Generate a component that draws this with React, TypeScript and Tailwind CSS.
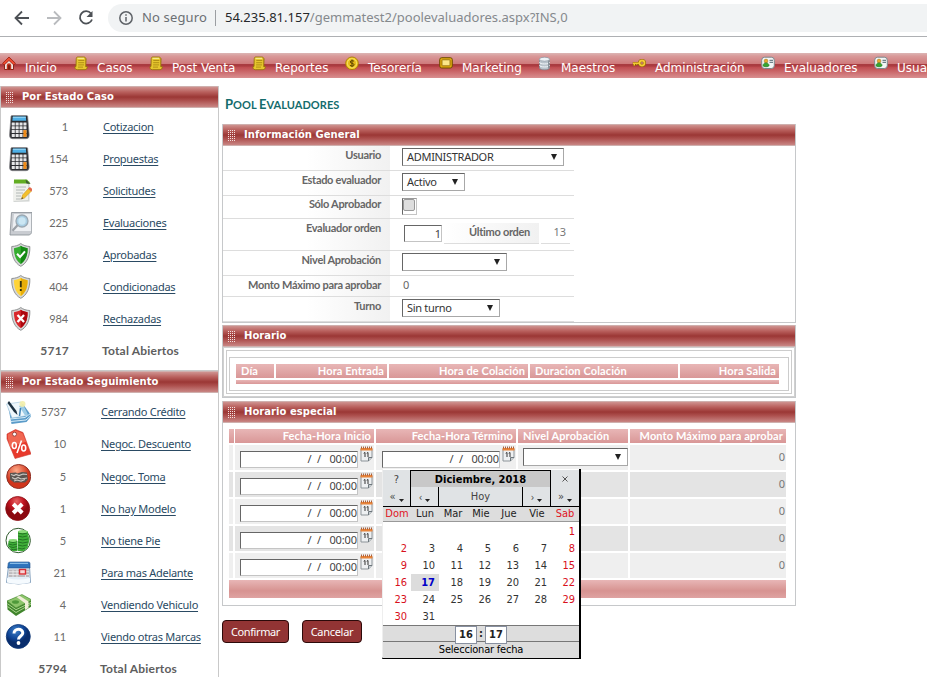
import React from "react";

const verdana = "font-['DejaVu_Sans',sans-serif]";
const calibri = "font-['Lato',sans-serif]";
const segoe = "font-['Noto_Sans',sans-serif]";
const tahoma = "font-['DejaVu_Sans_Condensed','DejaVu_Sans',sans-serif]";

/* ---------- menu icons (14 x 16) ---------- */
const HomeIcon = () => (
  <svg width="14" height="16" viewBox="0 0 14 16">
    <path d="M2.500 7v6.500h9V7L7 3z" fill="#f1e6e3" stroke="#8a2416" />
    <path d="M.6 7.300L7 1l6.400 6.300-1.600 1.700L7 4.500 2.200 9z" fill="#ee4a30" stroke="#951f10" strokeWidth=".8" />
    <path d="M4.800 13.500V9.500a2.200 2.200 0 0 1 4.400 0v4z" fill="#c2331e" />
    <path d="M6.200 13.500v-3.800a.8.8 0 0 1 1.600 0v3.800z" fill="#6d170c" />
  </svg>
);
const ScrollIcon = () => (
  <svg width="14" height="16" viewBox="0 0 14 16">
    <path d="M3.500 1h6.300c1.700 0 2.700 1.500 2.200 3.500l-.3 6h1.500c.3 2-.7 3.200-2.200 3.200H3.300C1.300 13.700.8 12 1 10.500h1l.2-7C2.200 2 2.600 1 3.500 1z" fill="#e6c62e" stroke="#96730c" strokeWidth=".9" />
    <path d="M4.300 4.500h6M4.200 6.700h6M4.100 8.900h6M4 11.100h5" stroke="#a5830f" strokeWidth=".8" />
    <path d="M3.500 2.300h6.500" stroke="#fbf0a0" />
    <path d="M11.500 3v8" stroke="#b08c14" strokeWidth=".8" />
  </svg>
);
const CoinIcon = () => (
  <svg width="14" height="16" viewBox="0 0 14 16">
    <circle cx="7" cy="7.300" r="6.300" fill="#f5cf28" stroke="#a57b05" strokeWidth=".9" />
    <circle cx="7" cy="7.300" r="4.500" fill="#e3b717" stroke="#fbea83" strokeWidth=".7" />
    <path d="M9 5.300C8.300 4.500 5.300 4.300 5.300 6c0 1.600 3.700 1 3.700 2.700 0 1.700-3 1.600-3.900.6M7 3.500v7.600" stroke="#5c4300" fill="none" />
  </svg>
);
const TvIcon = () => (
  <svg width="14" height="16" viewBox="0 0 14 16">
    <rect x=".7" y="1.700" width="12.600" height="10.300" rx="2" fill="#e0ab10" stroke="#6f4d00" />
    <rect x="3" y="3.800" width="8" height="6" rx=".6" fill="#fbe689" stroke="#8c6504" strokeWidth=".8" />
  </svg>
);
const DbIcon = () => (
  <svg width="14" height="16" viewBox="0 0 14 16">
    <path d="M1.500 3v9c0 2.400 10 2.400 10 0V3z" fill="#b9c3cb" stroke="#7c878f" strokeWidth=".7" />
    <ellipse cx="6.500" cy="3.200" rx="5" ry="2" fill="#edf3f7" stroke="#8995a0" strokeWidth=".7" />
    <path d="M1.500 6.300c0 2.200 10 2.200 10 0M1.500 9.300c0 2.200 10 2.200 10 0" stroke="#f2f6f9" fill="none" />
    <path d="M10.500 4.500v8" stroke="#89949c" />
  </svg>
);
const KeyIcon = () => (
  <svg width="14" height="16" viewBox="0 0 14 16">
    <path d="M8 7.300H.8M2.300 7v2.800M4.600 7v2" stroke="#8f6500" strokeWidth="2.600" fill="none" />
    <circle cx="10" cy="7" r="2.500" fill="none" stroke="#8f6500" strokeWidth="3" />
    <path d="M8 7.300H1M2.300 7v2.400M4.600 7v1.600" stroke="#f3ca36" strokeWidth="1.400" fill="none" />
    <circle cx="10" cy="7" r="2.500" fill="none" stroke="#f3ca36" strokeWidth="1.800" />
  </svg>
);
const CardIcon = () => (
  <svg width="14" height="16" viewBox="0 0 14 16">
    <rect x=".7" y="1.200" width="12.600" height="11.300" rx="3" fill="#f3f6f6" stroke="#7b898c" />
    <circle cx="5" cy="5" r="1.900" fill="#e7ac2c" stroke="#a27015" strokeWidth=".5" />
    <path d="M2 9.500c0-3.500 6-3.500 6 0 0 1.700-6 1.700-6 0z" fill="#36a52f" stroke="#16751a" strokeWidth=".6" />
    <path d="M8.500 4.300H12M8.500 6.300H12" stroke="#4c646e" />
  </svg>
);

const menu: { label: string; w: string; Icon: React.FC }[] = [
  { label: "Inicio", w: "w-[72px]", Icon: HomeIcon },
  { label: "Casos", w: "w-[75px]", Icon: ScrollIcon },
  { label: "Post Venta", w: "w-[103px]", Icon: ScrollIcon },
  { label: "Reportes", w: "w-[93px]", Icon: ScrollIcon },
  { label: "Tesorería", w: "w-[94px]", Icon: CoinIcon },
  { label: "Marketing", w: "w-[99px]", Icon: TvIcon },
  { label: "Maestros", w: "w-[94px]", Icon: DbIcon },
  { label: "Administración", w: "w-[129px]", Icon: KeyIcon },
  { label: "Evaluadores", w: "w-[113px]", Icon: CardIcon },
  { label: "Usua", w: "w-[53px]", Icon: CardIcon },
];

/* ---------- sidebar icons (26 x 30) ---------- */
const Svg = ({ children }: { children: React.ReactNode }) => (
  <svg width="26" height="30" viewBox="0 0 26 30">{children}</svg>
);
const Calculator = () => (
  <Svg>
    <path d="M6 3.500h14.500q1 0 1.200 1l1.500 18.500q.2 3.700-3 3.700H6.500q-3.200 0-3-3.700L5 4.500q.1-1 1-1z" fill="#2b2c30" stroke="#8a8a8e" strokeWidth=".7" />
    <path d="M6.800 4.500h13l.4 4.300H6.300z" fill="#4fb0e6" />
    <path d="M6.800 5.300h13" stroke="#9bd8f6" />
    <g fill="#e6e6e8">
      {[0, 1, 2, 3].map((r) => [0, 1, 2, 3].map((c) => (
        <rect key={`${r}${c}`} x={5.700 + c * 3.900} y={10.500 + r * 3.800} width="3.100" height="3" rx=".3" />
      )))}
    </g>
    <rect x="17.400" y="18.100" width="3.100" height="6.800" fill="#f08a16" />
  </Svg>
);
const Notes = () => (
  <Svg>
    <path d="M8 5h15.500v20.500l-16 .5z" fill="#d2d5d3" />
    <path d="M7.500 5h14.500v19L7 25z" fill="#eff0ec" />
    <path d="M8 3.500h13l3.500 4H8z" fill="#62ad22" />
    <path d="M19.500 3.500l5 4.500-4-.5z" fill="#3c5a34" />
    <path d="M10 11h10M10 14h9M10 17h7M10 20h5M10 23h6" stroke="#b2b8b6" />
    <path d="M15.500 23l1-4L22.500 12.500l3 2.600L18.500 22z" fill="#f3c02c" stroke="#c28a18" strokeWidth=".5" />
    <path d="M22 12.700l3.300 2.800 1.500-2-3-2.500z" fill="#e2694e" />
    <path d="M15.500 23l.5-1.700 1.300 1z" fill="#333" />
  </Svg>
);
const Magnify = () => (
  <Svg>
    <path d="M5.500 4.500h20.500v20l-2.500 2.500H4z" fill="#c9ccd1" stroke="#878d93" strokeWidth=".8" />
    <path d="M8 6h17v17H6.500z" fill="#eef0f3" />
    <circle cx="16" cy="13" r="6" fill="#a9cde2" stroke="#9ba8b2" strokeWidth="1.300" />
    <circle cx="16" cy="13" r="3.700" fill="#cbe6f3" />
    <path d="M11.500 17.300l-5 5.500" stroke="#9ba0a6" strokeWidth="2.300" />
  </Svg>
);
const Shield = ({ a, b, children }: { a: string; b: string; children: React.ReactNode }) => (
  <Svg>
    <g transform="translate(1.300 1.200) scale(.93)">
      <path d="M14.500 2.500c2.500 2 6 3 9.700 3.200C24.700 15.800 21 23.800 14.500 27 8 23.800 4.300 15.800 4.800 5.700c3.700-.2 7.200-1.200 9.700-3.200z" fill="#d5d7d7" stroke="#8b8d8e" />
      <path d="M14.500 5c2 1.500 4.300 2.300 7.300 2.500.2 7.800-2.300 13.700-7.300 17-5-3.300-7.500-9.200-7.300-17C10.200 7.300 12.500 6.500 14.500 5z" fill={a} />
      <path d="M14.500 5v19.500c5-3.300 7.500-9.200 7.300-17C18.800 7.300 16.500 6.500 14.500 5z" fill={b} />
      {children}
    </g>
  </Svg>
);
const ShieldOk = () => (
  <Shield a="#35ad30" b="#148914"><path d="M10.500 13.500l3.200 3.500 5.300-6" stroke="#fff" strokeWidth="2.200" fill="none" /></Shield>
);
const ShieldWarn = () => (
  <Shield a="#ffd438" b="#e8ae0a"><path d="M14.500 8.500v6.500M14.500 17v2.200" stroke="#35310c" strokeWidth="2" /></Shield>
);
const ShieldBad = () => (
  <Shield a="#d9272b" b="#ad080f"><path d="M11 10.500l7 7.500M18 10.500L11 18" stroke="#fff" strokeWidth="2.500" /></Shield>
);
const Contract = () => (
  <Svg>
    <path d="M3 9l15-2 8.500 12-5 6-15 2z" fill="#5a9bc9" />
    <path d="M5 22l15-1.500 5.500-4M5.500 24.500l15.500-1.500 5-4.500" stroke="#d7edf9" fill="none" />
    <path d="M1.500 7L16 5l6.500 13.500L7 21z" fill="#eef7fc" stroke="#9dc3dc" strokeWidth=".6" />
    <path d="M14 9l6 9.500 3-1-5-10z" fill="#9ccbe5" />
    <circle cx="17.500" cy="7" r="3" fill="#f3eeaa" opacity=".9" />
    <path d="M4 4l7.500 10 1 4-3.500-3L2.500 6z" fill="#1d3040" />
    <path d="M14.500 19l1-8" stroke="#3f82b4" strokeWidth="1.500" />
  </Svg>
);
const Tag = () => (
  <Svg>
    <path d="M2 5l8.500-4.500 7.500 3 8 21.500-16 4.500L2 10z" fill="#e83a2c" stroke="#c93a30" strokeWidth=".6" />
    <path d="M2.800 5.500l7.700-4 7 2.800 3.500 8.500L5 18 2.900 9z" fill="#f1735c" opacity=".8" />
    <circle cx="9.500" cy="5.200" r="2" fill="#fff" stroke="#9a443d" />
    <ellipse cx="9.300" cy="16.500" rx="2" ry="3" fill="none" stroke="#fff" strokeWidth="1.600" />
    <ellipse cx="18.700" cy="19" rx="2" ry="3" fill="none" stroke="#fff" strokeWidth="1.600" />
    <path d="M16.500 11.500l-4.500 12.500" stroke="#fff" strokeWidth="1.600" />
  </Svg>
);
const CarBall = () => (
  <Svg>
    <defs><radialGradient id="ball" cx=".4" cy=".25"><stop offset="0" stopColor="#ffab89" /><stop offset="1" stopColor="#d0351c" /></radialGradient></defs>
    <circle cx="13.700" cy="14.500" r="12" fill="url(#ball)" stroke="#8f3226" />
    <path d="M5 11l6-.5 1 1 5-1.500 5 .5 1 7-3 3H9l-4-3z" fill="#5a5450" />
    <path d="M6 12.500l3 1 2-1 3 1 4-1.500 4 .5M7 15.500l3 1.500 3-1.500 3 1.500 6-1M9 19l3-1 4 1 4-1.500" stroke="#cdc8c3" strokeWidth="1.200" fill="none" />
  </Svg>
);
const CrossBall = () => (
  <Svg>
    <defs><radialGradient id="crossball" cx=".45" cy=".2"><stop offset="0" stopColor="#e86464" /><stop offset=".6" stopColor="#c01420" /><stop offset="1" stopColor="#8c0910" /></radialGradient></defs>
    <circle cx="12.700" cy="14.500" r="12" fill="url(#crossball)" stroke="#8c0c12" strokeWidth=".8" />
    <path d="M8.200 10l9 9M17.200 10l-9 9" stroke="#fff" strokeWidth="4" />
  </Svg>
);
const CoinStack = () => (
  <Svg>
    <circle cx="13.200" cy="14.500" r="12.200" fill="#fff" stroke="#2f5a2c" />
    <path d="M3.500 15h9v10h-5L3 20zM13 5h9.500l2 9-2 8-4 3h-5.500z" fill="#3fae38" />
    <g stroke="#206e20" strokeWidth=".9" fill="none">
      <path d="M4 15.500q4 2 8 0M3.500 18q4 2 8.500 0M4 20.500q4 2 8 0M5.500 23q3 1.500 7 0M13 7q4.500 2 9 0M13 10q4.500 2 9 0M13 13q4.500 2 10 0M13 16q4.500 2 10 0M13 19q4.500 2 9 0M13 22q4.500 2 7 0" />
    </g>
    <ellipse cx="17.700" cy="5.500" rx="4.700" ry="1.600" fill="#8cdb7b" />
    <ellipse cx="8" cy="14.500" rx="4.300" ry="1.400" fill="#8cdb7b" />
  </Svg>
);
const Planner = () => (
  <Svg>
    <path d="M3.500 8h21l1 16.500q-12 3-24 0z" fill="#e3eef7" stroke="#6f8fb0" strokeWidth=".8" />
    <path d="M5 4h18.500q1.500 0 1.500 1.500V10H2.700l.5-4.500Q3.500 4 5 4z" fill="#2f74bd" stroke="#1e4f88" strokeWidth=".6" />
    <path d="M5 5.300h18" stroke="#9dcdf2" />
    <path d="M4 11.500h20v7.500H3.500z" fill="#bdbabd" />
    <path d="M4 13.700h20M4 16.500h20M8 12v7M12 12v7M20.500 12v7" stroke="#ededed" strokeWidth=".8" />
    <rect x="14.500" y="11.500" width="6" height="4.500" fill="#f7d6d6" stroke="#db2f34" strokeWidth="1.400" />
    <path d="M2 20q11.500 3 23 0v4.500q-11.500 3-23 0z" fill="#f5fafe" />
  </Svg>
);
const Cash = () => (
  <Svg>
    <path d="M2 11L17 5l10 5v6L11 26 2.500 19.500z" fill="#41852d" />
    <path d="M2 11l15-6.500L27 10l-16 8z" fill="#8cc46a" stroke="#4a8a34" strokeWidth=".6" />
    <path d="M2.500 13.700l8.500 6L27 12M2.500 16.500l8.500 6 16-9" stroke="#a9d58b" fill="none" />
    <path d="M11.500 7l8.500 6.300V20l3.500-2v-6.500L14.500 5.700z" fill="#f0eed8" />
    <ellipse cx="10.500" cy="12" rx="3.500" ry="1.800" fill="#4f993a" />
  </Svg>
);
const Help = () => (
  <Svg>
    <defs><radialGradient id="helpball" cx=".4" cy=".25"><stop offset="0" stopColor="#3f80c8" /><stop offset=".7" stopColor="#0f4596" /><stop offset="1" stopColor="#092d6c" /></radialGradient></defs>
    <circle cx="13.300" cy="14.500" r="12" fill="url(#helpball)" stroke="#0b3576" strokeWidth=".8" />
    <path d="M9 11.500c0-5.500 8.800-5.400 8.800-.5 0 3-4.300 3-4.300 6.500" stroke="#fff" strokeWidth="3" fill="none" />
    <circle cx="13.500" cy="21" r="1.900" fill="#fff" />
  </Svg>
);

type Stat = { n: string; label: string; Icon: React.FC };
const caso: Stat[] = [
  { n: "1", label: "Cotizacion", Icon: Calculator },
  { n: "154", label: "Propuestas", Icon: Calculator },
  { n: "573", label: "Solicitudes", Icon: Notes },
  { n: "225", label: "Evaluaciones", Icon: Magnify },
  { n: "3376", label: "Aprobadas", Icon: ShieldOk },
  { n: "404", label: "Condicionadas", Icon: ShieldWarn },
  { n: "984", label: "Rechazadas", Icon: ShieldBad },
];
const seguimiento: Stat[] = [
  { n: "5737", label: "Cerrando Crédito", Icon: Contract },
  { n: "10", label: "Negoc. Descuento", Icon: Tag },
  { n: "5", label: "Negoc. Toma", Icon: CarBall },
  { n: "1", label: "No hay Modelo", Icon: CrossBall },
  { n: "5", label: "No tiene Pie", Icon: CoinStack },
  { n: "21", label: "Para mas Adelante", Icon: Planner },
  { n: "4", label: "Vendiendo Vehiculo", Icon: Cash },
  { n: "11", label: "Viendo otras Marcas", Icon: Help },
];

const barBg = "bg-[linear-gradient(180deg,#cf9390_0%,#b9605d_25%,#9b3735_50%,#ad504e_68%,#c98684_100%)]";
const pinkBg = "bg-[linear-gradient(180deg,#e8b6b6,#d99797)]";

function PanelHeader({ title }: { title: string }) {
  return (
    <div className={`flex h-[22px] items-center border-y border-[#cfb0ae] pl-[5px] ${barBg}`}>
      <svg width="8" height="12" viewBox="0 0 8 12" className="mt-px shrink-0">
        {[0, 2, 4, 6, 8, 10].map((y) => [0, 2, 4, 6].map((x) => (
          <rect key={`${x}-${y}`} x={x} y={y} width="1" height="1" fill="#f4dfde" />
        )))}
      </svg>
      <span className={`${verdana} whitespace-nowrap pl-[8px] text-[10px] font-bold leading-[20px] tracking-[0.04px] text-white`}>{title}</span>
    </div>
  );
}

function StatRow({ s, second }: { s: Stat; second?: boolean }) {
  return (
    <div className="flex h-[32px] items-center">
      <div className={`w-[32px] shrink-0 ${second ? "pl-[4px]" : "pl-[5px]"}`}><s.Icon /></div>
      <div className={`${second ? "w-[33px]" : "w-[35px]"} ${calibri} text-right text-[11px] tracking-[-0.1px] text-[#6b6b6b]`}>{s.n}</div>
      <a className={`ml-[35px] ${segoe} whitespace-nowrap text-[11px] tracking-[-0.28px] text-[#2a4a63] underline underline-offset-2`}>{s.label}</a>
    </div>
  );
}

function Total({ n, second }: { n: string; second?: boolean }) {
  return (
    <div className={`flex h-[32px] items-center ${calibri} text-[12px] font-bold tracking-[0.2px] text-[#5e5e5e]`}>
      <span className={`${second ? "w-[66px]" : "w-[68px]"} text-right`}>{n}</span>
      <span className="pl-[33px]">Total Abiertos</span>
    </div>
  );
}

function Select({ w, text = "" }: { w: string; text?: string }) {
  return (
    <div className={`flex h-[18px] shrink-0 items-center justify-between border border-[#a8a8a8] border-l-[#666] border-t-[#666] bg-white pl-[4px] pr-[6px] ${w}`}>
      <span className={`${segoe} whitespace-nowrap text-[11px] leading-[16px] tracking-[-0.3px] text-[#333]`}>{text}</span>
      <svg width="6" height="6" viewBox="0 0 6 6"><path d="M0 0h6L3 6z" fill="#222" /></svg>
    </div>
  );
}

function FormRow({ label, h, pt = "pt-[2px]", children }: { label: string; h: string; pt?: string; children: React.ReactNode }) {
  return (
    <div className={`flex w-[351px] border-b border-[#ddd] ${h}`}>
      <div className={`w-[167px] shrink-0 bg-[linear-gradient(90deg,#fff_50%,#f1f1f1)] pr-[9px] text-right text-[11px] font-bold leading-[14px] tracking-[-0.3px] text-[#666] ${calibri} ${pt}`}>{label}</div>
      <div className="flex flex-1 items-start pl-[12px]">{children}</div>
    </div>
  );
}

function CalendarIcon() {
  return (
    <svg width="13" height="16" viewBox="0 0 13 16" className="shrink-0">
      <path d="M1 3h11v8.500l-3.500 3.500H1z" fill="#eef0f2" stroke="#8d9499" />
      <path d="M.5 2h12v2.500H.5z" fill="#e8843a" />
      <path d="M1.500 .5v2M3.500 .5v2M5.500 .5v2M7.500 .5v2M9.500 .5v2M11.500 .5v2" stroke="#a2502a" strokeWidth=".9" />
      <path d="M3.700 7.300l1.300-.8v4.500M6.700 7.300l1.300-.8v4.500" stroke="#333" fill="none" />
      <path d="M12 11.500H8.500V15" fill="#c5cbcf" stroke="#6e777d" />
    </svg>
  );
}

function DateCell({ pad }: { pad: string }) {
  return (
    <div className={`flex pt-[1px] ${pad}`}>
      <div className={`mt-[5px] h-[17px] w-[118px] border border-[#c4c4c4] border-l-[#666] border-t-[#666] bg-white text-right text-[11px] leading-[14px] text-[#444] ${segoe} whitespace-pre tracking-[-0.1px]`}>{"/  /   00:00"}</div>
      <div className="pl-[2px]"><CalendarIcon /></div>
    </div>
  );
}

const cols = "grid grid-cols-[4px_139px_140px_110px_156px] gap-x-[2px]";

function PinkCell({ children, right }: { children?: React.ReactNode; right?: boolean }) {
  return (
    <div className={`${pinkBg} ${calibri} h-[14px] whitespace-nowrap text-[11px] font-bold leading-[14px] tracking-[0.12px] text-white ${right ? "pr-[3px] text-right" : "pl-[5px] text-left"}`}>{children}</div>
  );
}

const days = ["Dom", "Lun", "Mar", "Mie", "Jue", "Vie", "Sab"];
const cells = [...Array(6).fill(""), ...Array.from({ length: 31 }, (_, i) => String(i + 1))];

function NavCell({ children, drop, last }: { children: React.ReactNode; drop?: boolean; last?: boolean }) {
  return (
    <div className={`flex items-center justify-center border-b border-black bg-[#e0e3e5] pt-[2px] ${last ? "" : "border-r"}`}>
      {children}
      {drop && <svg width="5" height="3" viewBox="0 0 5 3" className="ml-[3px] mt-[6px]"><path d="M0 0h5L2.500 3z" fill="#222" /></svg>}
    </div>
  );
}

function DatePicker() {
  return (
    <div className={`absolute left-[382px] top-[469px] z-10 h-[190px] w-[199px] border-b-2 border-l border-r-2 border-b-black border-l-[#eee] border-r-black bg-white text-[11px] text-[#222] ${tahoma}`}>
      <div className="grid h-[18px] grid-cols-[27px_141px_28px]">
        <div className="mt-[1px] flex items-center justify-center border-b border-black bg-[#e0e3e5] pt-px text-[#444]">?</div>
        <div className="mt-[1px] flex items-center justify-center border border-black bg-[#c8c8c8] pt-px font-bold text-black">Diciembre, 2018</div>
        <div className="mt-[1px] flex items-center justify-center border-b border-black bg-[#e0e3e5]">
          <svg width="6" height="6" viewBox="0 0 6 6"><path d="M.5.5l5 5M5.500.5l-5 5" stroke="#555" /></svg>
        </div>
      </div>
      <div className="grid h-[17px] grid-cols-[28px_28px_84px_28px_28px] text-[#444]">
        <NavCell drop>«</NavCell>
        <NavCell drop><span className="text-[10px]">‹</span></NavCell>
        <NavCell>Hoy</NavCell>
        <NavCell drop><span className="text-[10px]">›</span></NavCell>
        <NavCell drop last>»</NavCell>
      </div>
      <div className="grid h-[18px] grid-cols-7 border-b border-[#999] bg-[#ddd] text-center leading-[19px]">
        {days.map((d, i) => <span key={d} className={i % 6 === 0 ? "text-[#e0141e]" : ""}>{d}</span>)}
      </div>
      <div className="grid grid-cols-7 pt-[1px] text-right leading-[17px]">
        {cells.map((c, i) => (
          <span
            key={i}
            className={`h-[17px] pr-[4px] ${c === "17" ? "bg-[#dcdcdc] font-bold text-[#0000c8]" : i % 7 === 0 || i % 7 === 6 ? "text-[#d8101c]" : "text-[#333]"}`}
          >
            {c}
          </span>
        ))}
      </div>
      <div className="flex h-[16px] items-start justify-center border-t border-[#777] bg-[#ddd] font-bold leading-[15px]">
        <span className="z-10 h-[18px] w-[22px] border border-[#8890a0] bg-white text-center">16</span>
        <span className="w-[8px] text-center">:</span>
        <span className="z-10 h-[18px] w-[22px] border border-[#8890a0] bg-white text-center">17</span>
      </div>
      <div className="h-[17px] border-t border-[#777] bg-[#ddd] text-center leading-[16px] tracking-[-0.2px] text-black">Seleccionar fecha</div>
    </div>
  );
}

export default function App() {
  return (
    <div className="relative h-[677px] w-[927px] overflow-hidden bg-white">
      {/* browser toolbar */}
      <div className="flex h-[37px] items-center border-b border-[#aeb0b3]">
        <svg width="108" height="36" viewBox="0 0 108 36" fill="none" strokeWidth="1.800" className="shrink-0">
          <path d="M29 18H16M22 11.500L15.500 18l6.500 6.500" stroke="#4d5156" />
          <path d="M47 18h13M54 11.500l6.500 6.500-6.500 6.500" stroke="#b9bbbe" />
          <path d="M91 13.500A6.200 6.200 0 1 0 92 19.500" stroke="#4d5156" />
          <path d="M92.500 11v6h-6z" fill="#4d5156" />
        </svg>
        <div className={`flex h-[28px] flex-1 items-center rounded-l-full bg-[#f1f3f4] pl-[11px] text-[13px] text-[#85898d] ${segoe}`}>
          <svg width="14" height="14" viewBox="0 0 14 14" fill="none" stroke="#5f6368" strokeWidth="1.500" className="shrink-0">
            <circle cx="7" cy="7" r="6.200" /><path d="M7 6v4.500M7 3.300v1.500" />
          </svg>
          <span className="w-[82px] shrink-0 whitespace-nowrap pl-[9px] tracking-[0.15px] text-[#6b6f73]">No seguro</span>
          <span className="h-[16px] w-px shrink-0 bg-[#9b9ea2]" />
          <span className="whitespace-nowrap pl-[9px]"><span className="text-[#26282b]">54.235.81.157</span>/gemmatest2/poolevaluadores.aspx?INS,0</span>
        </div>
      </div>

      {/* main menu */}
      <div className="mt-[16px] flex h-[25px] overflow-hidden bg-[linear-gradient(180deg,#dcb6b5_0%,#d99a9a_12%,#cf7b7c_42%,#a93b40_46%,#ab3b40_52%,#c04c50_57%,#d98f90_100%)] pl-[2px]">
        {menu.map(({ label, w, Icon }, i) => (
          <div key={i} className={`flex shrink-0 ${w}`}>
            <div className="w-[23px] pt-[3px]"><Icon /></div>
            <span className={`whitespace-nowrap pt-[6px] text-[12px] leading-[19px] text-white ${verdana}`}>{label}</span>
          </div>
        ))}
      </div>

      <div className="flex pt-[8px]">
        {/* sidebar */}
        <div className="h-[591px] w-[219px] shrink-0 border-x border-[#c9c9c9]">
          <PanelHeader title="Por Estado Caso" />
          <div className="pt-[3px]">
            {caso.map((s) => <StatRow key={s.label} s={s} />)}
            <Total n="5717" />
          </div>
          <div className="mt-[3px] border-t border-[#c9c9c9]"><PanelHeader title="Por Estado Seguimiento" /></div>
          <div className="pt-[3px]">
            {seguimiento.slice(0, 2).map((s) => <StatRow key={s.label} s={s} second />)}
          </div>
          <div className="pt-px">
            {seguimiento.slice(2).map((s) => <StatRow key={s.label} s={s} second />)}
            <Total n="5794" second />
          </div>
        </div>

        {/* content */}
        <div className="ml-[3px] w-[574px]">
          <h1 className={`h-[38px] pl-[3px] pt-[8px] text-[11px] font-bold leading-[20px] tracking-[0.03px] text-[#146c6c] ${calibri}`}>
            <span className="text-[13px]">P</span>OOL <span className="text-[13px]">E</span>VALUADORES
          </h1>

          <section className="border border-t-0 border-[#c6c8ca]">
            <PanelHeader title="Información General" />
            <FormRow label="Usuario" h="h-[25px]"><div className="pt-[2px]"><Select w="w-[162px]" text="ADMINISTRADOR" /></div></FormRow>
            <FormRow label="Estado evaluador" h="h-[25px]"><div className="pt-[2px]"><Select w="w-[63px]" text="Activo" /></div></FormRow>
            <FormRow label="Sólo Aprobador" h="h-[23px]" pt="pt-[1px]">
              <div className="mt-[2px] h-[17px] w-[15px] border border-[#c4c4c4] border-l-[#666] border-t-[#999]">
                <div className="h-[12px] w-[12px] rounded-[2px] border border-[#999] bg-[#dedede]" />
              </div>
            </FormRow>
            <FormRow label="Evaluador orden" h="h-[32px]">
              <div className="flex pl-[2px] pt-[4px]">
                <div className={`mt-[2px] h-[17px] w-[38px] border border-[#c4c4c4] border-l-[#666] border-t-[#666] text-right text-[11px] leading-[15px] text-[#444] ${segoe}`}>1</div>
                <div className={`ml-[2px] h-[21px] w-[95px] border-b border-[#ddd] bg-[linear-gradient(90deg,#fff,#f1f1f1)] pr-[9px] text-right text-[11px] font-bold leading-[17px] tracking-[-0.3px] text-[#666] ${calibri}`}>Último orden</div>
                <div className={`ml-[2px] h-[21px] w-[29px] border-b border-[#ddd] pr-[4px] text-right text-[11px] leading-[18px] text-[#777] ${segoe}`}>13</div>
              </div>
            </FormRow>
            <FormRow label="Nivel Aprobación" h="h-[25px]"><div className="pt-[2px]"><Select w="w-[105px]" /></div></FormRow>
            <FormRow label="Monto Máximo para aprobar" h="h-[21px]"><span className={`pl-px text-[11px] leading-[18px] text-[#666] ${segoe}`}>0</span></FormRow>
            <FormRow label="Turno" h="h-[25px]"><div className="pt-[2px]"><Select w="w-[98px]" text="Sin turno" /></div></FormRow>
          </section>

          <section className="mt-[2px] border border-t-0 border-[#c6c8ca]">
            <PanelHeader title="Horario" />
            <div className="border border-[#d0d0d0] p-[2px]">
              <div className="border border-[#ccc] p-[2px] pt-[6px]">
                <div className="h-[34px] border border-[#ccc] px-[6px] pt-[6px]">
                  <div className="grid grid-cols-[38px_111px_139px_148px_99px] gap-x-[2px]">
                    <PinkCell>Día</PinkCell>
                    <PinkCell right>Hora Entrada</PinkCell>
                    <PinkCell right>Hora de Colación</PinkCell>
                    <PinkCell>Duracion Colación</PinkCell>
                    <PinkCell right>Hora Salida</PinkCell>
                  </div>
                  <div className={`mt-[2px] h-[4px] w-[543px] ${pinkBg}`} />
                </div>
              </div>
            </div>
          </section>

          <section className="mt-[3px] h-[205px] border border-t-0 border-[#c6c8ca]">
            <PanelHeader title="Horario especial" />
            <div className="pl-[6px] pt-[6px]">
              <div className={cols}>
                <PinkCell />
                <PinkCell right>Fecha-Hora Inicio</PinkCell>
                <PinkCell right>Fecha-Hora Término</PinkCell>
                <PinkCell>Nivel Aprobación</PinkCell>
                <PinkCell right>Monto Máximo para aprobar</PinkCell>
              </div>
              <div className="flex flex-col gap-[2px] pt-[2px]">
                {[0, 1, 2, 3, 4].map((r) => (
                  <div key={r} className={`${cols} h-[25px] ${r % 2 ? "[&>div]:bg-[#e4e4e4]" : "[&>div]:bg-[#efefef]"}`}>
                    <div />
                    <div><DateCell pad="pl-[5px]" /></div>
                    <div>{r === 0 && <DateCell pad="pl-[6px]" />}</div>
                    <div className="pl-[5px] pt-[3px]">{r === 0 && <Select w="w-[105px]" />}</div>
                    <div className={`pr-px text-right text-[11px] leading-[24px] text-[#777] ${segoe}`}>0</div>
                  </div>
                ))}
              </div>
              <div className="mt-[2px] h-[18px] w-[557px] bg-[linear-gradient(180deg,#e8b6b6,#d79391_60%,#dfa3a2)]" />
            </div>
          </section>

          <div className={`flex gap-[13px] pt-[14px] text-[11px] leading-[19px] text-white ${segoe}`}>
            <button className="h-[23px] w-[67px] rounded-[4px] border border-[#2c0a0a] bg-[#923434] tracking-[-0.4px]">Confirmar</button>
            <button className="h-[23px] w-[60px] rounded-[4px] border border-[#2c0a0a] bg-[#923434] tracking-[-0.3px]">Cancelar</button>
          </div>
        </div>
      </div>

      <DatePicker />
    </div>
  );
}
